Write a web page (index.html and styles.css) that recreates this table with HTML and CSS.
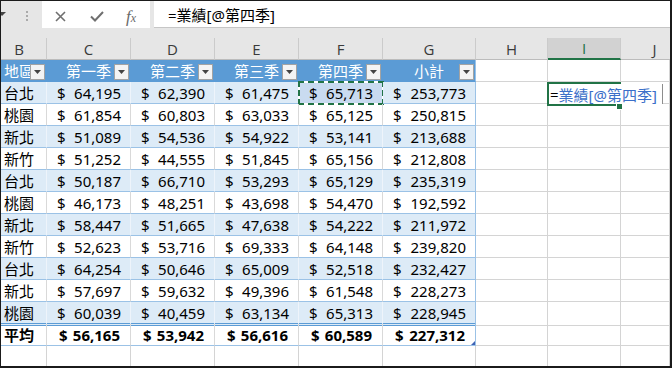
FILE: index.html
```html
<!DOCTYPE html>
<html lang="zh-Hant">
<head>
<meta charset="utf-8">
<link rel="stylesheet" href="styles.css">
</head>
<body>
<div class="frame">
  <div class="fbar">
    <div class="nb"><svg width="6" height="5" viewBox="0 0 6 5"><polygon points="-3,0 5,0 1,4" fill="#444"/></svg></div>
    <div class="grip"><svg width="3" height="11" viewBox="0 0 3 11"><rect x="0" y="0" width="2" height="2" fill="#aaa"/><rect x="0" y="4" width="2" height="2" fill="#aaa"/><rect x="0" y="8" width="2" height="2" fill="#aaa"/></svg></div>
    <div class="fbtns">
      <svg class="ix" width="11" height="11" viewBox="0 0 11 11"><path d="M1 1L10 10M10 1L1 10" stroke="#6f6f6f" stroke-width="1.6" fill="none"/></svg>
      <svg class="iv" width="14" height="11" viewBox="0 0 14 11"><path d="M1 5.5L5 9.5L13 1" stroke="#6f6f6f" stroke-width="2" fill="none"/></svg>
      <span class="fx">f<small>x</small></span>
    </div>
    <div class="finput">=業績[@第四季]</div>
  </div>

  <div class="r ch">
    <div class="c cb">B</div><div class="c">C</div><div class="c">D</div><div class="c">E</div><div class="c">F</div><div class="c">G</div><div class="c">H</div><div class="c sel">I</div><div class="c cj">J</div>
  </div>

  <div class="r th">
    <div class="c t l">地區<span class="fb"><svg width="7" height="4" viewBox="0 0 7 4"><polygon points="0,0 7,0 3.5,4" fill="#444"/></svg></span></div>
    <div class="c t">第一季<span class="fb"><svg width="7" height="4" viewBox="0 0 7 4"><polygon points="0,0 7,0 3.5,4" fill="#444"/></svg></span></div>
    <div class="c t">第二季<span class="fb"><svg width="7" height="4" viewBox="0 0 7 4"><polygon points="0,0 7,0 3.5,4" fill="#444"/></svg></span></div>
    <div class="c t">第三季<span class="fb"><svg width="7" height="4" viewBox="0 0 7 4"><polygon points="0,0 7,0 3.5,4" fill="#444"/></svg></span></div>
    <div class="c t">第四季<span class="fb"><svg width="7" height="4" viewBox="0 0 7 4"><polygon points="0,0 7,0 3.5,4" fill="#444"/></svg></span></div>
    <div class="c t g">小計<span class="fb"><svg width="7" height="4" viewBox="0 0 7 4"><polygon points="0,0 7,0 3.5,4" fill="#444"/></svg></span></div>
    <div class="c"></div><div class="c"></div><div class="c"></div>
  </div>

  <div class="r d band">
    <div class="c t l">台北</div><div class="c t n"><span>$</span><span>64,195</span></div><div class="c t n"><span>$</span><span>62,390</span></div><div class="c t n"><span>$</span><span>61,475</span></div><div class="c t n selc"><span>$</span><span>65,713</span></div><div class="c t n g"><span>$</span><span>253,773</span></div>
    <div class="c"></div><div class="c edit"><span class="ebox">=<span class="ref">業績[@第四季]</span></span><span class="handle"></span></div><div class="c"></div>
  </div>
  <div class="r d">
    <div class="c t l">桃園</div><div class="c t n"><span>$</span><span>61,854</span></div><div class="c t n"><span>$</span><span>60,803</span></div><div class="c t n"><span>$</span><span>63,033</span></div><div class="c t n"><span>$</span><span>65,125</span></div><div class="c t n g"><span>$</span><span>250,815</span></div>
    <div class="c"></div><div class="c"></div><div class="c"></div>
  </div>
  <div class="r d band">
    <div class="c t l">新北</div><div class="c t n"><span>$</span><span>51,089</span></div><div class="c t n"><span>$</span><span>54,536</span></div><div class="c t n"><span>$</span><span>54,922</span></div><div class="c t n"><span>$</span><span>53,141</span></div><div class="c t n g"><span>$</span><span>213,688</span></div>
    <div class="c"></div><div class="c"></div><div class="c"></div>
  </div>
  <div class="r d">
    <div class="c t l">新竹</div><div class="c t n"><span>$</span><span>51,252</span></div><div class="c t n"><span>$</span><span>44,555</span></div><div class="c t n"><span>$</span><span>51,845</span></div><div class="c t n"><span>$</span><span>65,156</span></div><div class="c t n g"><span>$</span><span>212,808</span></div>
    <div class="c"></div><div class="c"></div><div class="c"></div>
  </div>
  <div class="r d band">
    <div class="c t l">台北</div><div class="c t n"><span>$</span><span>50,187</span></div><div class="c t n"><span>$</span><span>66,710</span></div><div class="c t n"><span>$</span><span>53,293</span></div><div class="c t n"><span>$</span><span>65,129</span></div><div class="c t n g"><span>$</span><span>235,319</span></div>
    <div class="c"></div><div class="c"></div><div class="c"></div>
  </div>
  <div class="r d">
    <div class="c t l">桃園</div><div class="c t n"><span>$</span><span>46,173</span></div><div class="c t n"><span>$</span><span>48,251</span></div><div class="c t n"><span>$</span><span>43,698</span></div><div class="c t n"><span>$</span><span>54,470</span></div><div class="c t n g"><span>$</span><span>192,592</span></div>
    <div class="c"></div><div class="c"></div><div class="c"></div>
  </div>
  <div class="r d band">
    <div class="c t l">新北</div><div class="c t n"><span>$</span><span>58,447</span></div><div class="c t n"><span>$</span><span>51,665</span></div><div class="c t n"><span>$</span><span>47,638</span></div><div class="c t n"><span>$</span><span>54,222</span></div><div class="c t n g"><span>$</span><span>211,972</span></div>
    <div class="c"></div><div class="c"></div><div class="c"></div>
  </div>
  <div class="r d">
    <div class="c t l">新竹</div><div class="c t n"><span>$</span><span>52,623</span></div><div class="c t n"><span>$</span><span>53,716</span></div><div class="c t n"><span>$</span><span>69,333</span></div><div class="c t n"><span>$</span><span>64,148</span></div><div class="c t n g"><span>$</span><span>239,820</span></div>
    <div class="c"></div><div class="c"></div><div class="c"></div>
  </div>
  <div class="r d band">
    <div class="c t l">台北</div><div class="c t n"><span>$</span><span>64,254</span></div><div class="c t n"><span>$</span><span>50,646</span></div><div class="c t n"><span>$</span><span>65,009</span></div><div class="c t n"><span>$</span><span>52,518</span></div><div class="c t n g"><span>$</span><span>232,427</span></div>
    <div class="c"></div><div class="c"></div><div class="c"></div>
  </div>
  <div class="r d">
    <div class="c t l">新北</div><div class="c t n"><span>$</span><span>57,697</span></div><div class="c t n"><span>$</span><span>59,632</span></div><div class="c t n"><span>$</span><span>49,396</span></div><div class="c t n"><span>$</span><span>61,548</span></div><div class="c t n g"><span>$</span><span>228,273</span></div>
    <div class="c"></div><div class="c"></div><div class="c"></div>
  </div>
  <div class="r d band last">
    <div class="c t l">桃園</div><div class="c t n"><span>$</span><span>60,039</span></div><div class="c t n"><span>$</span><span>40,459</span></div><div class="c t n"><span>$</span><span>63,134</span></div><div class="c t n"><span>$</span><span>65,313</span></div><div class="c t n g"><span>$</span><span>228,945</span></div>
    <div class="c"></div><div class="c"></div><div class="c"></div>
  </div>
  <div class="r d total">
    <div class="c t l">平均</div><div class="c t n"><span>$</span><span>56,165</span></div><div class="c t n"><span>$</span><span>53,942</span></div><div class="c t n"><span>$</span><span>56,616</span></div><div class="c t n"><span>$</span><span>60,589</span></div><div class="c t n g"><span>$</span><span>227,312</span><span class="rsz"></span></div>
    <div class="c"></div><div class="c"></div><div class="c"></div>
  </div>
  <div class="r d">
    <div class="c"></div><div class="c"></div><div class="c"></div><div class="c"></div><div class="c"></div><div class="c"></div><div class="c"></div><div class="c"></div><div class="c"></div>
  </div>
</div>
</body>
</html>
```

FILE: styles.css
```css
* { box-sizing: border-box; margin: 0; padding: 0; }
body { margin: 0; background: #fff; }

.frame {
  width: 672px;
  height: 368px;
  border-style: solid;
  border-color: #1b1b1b;
  border-width: 1px 2px 2px 1px;
  overflow: hidden;
  background: #fff;
  font-family: "Noto Sans", "Noto Sans CJK TC", sans-serif;
  font-size: 15px;
  color: #000;
}

/* formula bar */
.fbar {
  height: 37px;
  background: #e6e6e6;
  display: flex;
  align-items: flex-start;
}
.nb {
  width: 20px;
  height: 27px;
  display: flex;
  align-items: center;
}
.nb svg { margin-top: -1px; }
.grip {
  width: 21px;
  height: 27px;
  display: flex;
  align-items: center;
  padding-left: 5px;
  padding-top: 3px;
}
.fbtns {
  width: 108px;
  height: 27px;
  background: #fff;
  display: flex;
  align-items: center;
  padding-left: 13px;
  padding-top: 3px;
}
.iv { margin-left: 24px; }
.fx {
  margin-left: 22px;
  font-family: "Liberation Serif", "DejaVu Serif", serif;
  font-style: italic;
  font-size: 17px;
  color: #6a6a6a;
  line-height: 1;
}
.fx small { font-size: 12px; }
.finput {
  flex: 1;
  height: 27px;
  margin-left: 4px;
  background: #fff;
  border-bottom: 1px solid #c6c6c6;
  padding-left: 14px;
  display: flex;
  align-items: center;
  padding-top: 1px;
}

/* grid rows */
.r {
  display: grid;
  grid-template-columns: 46px 84px 84px 84px 84px 93px 72px 73px 1fr;
  height: 22px;
}
.c {
  position: relative;
  display: flex;
  align-items: center;
  white-space: nowrap;
  border-right: 1px solid #d4d4d4;
  border-bottom: 1px solid #d4d4d4;
}

/* column headers */
.ch .c {
  background: #e6e6e6;
  border-right-color: #cbcbcb;
  border-bottom-color: #bcbcbc;
  justify-content: center;
  color: #3a3a3a;
  font-family: "Open Sans", "Noto Sans", sans-serif;
}
.ch .cb { padding-right: 9px; }
.ch .cj { padding-left: 18px; border-right: none; }
.ch .sel {
  background: #d2d2d2;
  border-bottom: 2px solid #217346;
  color: #217346;
}

/* table header */
.th .t {
  background: #5b9bd5;
  color: #fff;
  justify-content: center;
  border-right-color: #5b9bd5;
  border-bottom-color: #5b9bd5;
}
.th .t.l { justify-content: flex-start; padding-left: 3px; }
.th .t.g { border-right-color: #9bc2e6; }
.fb {
  position: absolute;
  right: 1px;
  top: 4px;
  width: 15px;
  height: 16px;
  background: #f4f4f4;
  border: 1px solid #a3a3a3;
  display: flex;
  align-items: center;
  justify-content: center;
  z-index: 2;
}

/* data */
.d .t {
  border-bottom-color: #9bc2e6;
  border-right-color: #d9d9d9;
}
.d.band .t {
  background: #ddebf7;
  border-right-color: #eef4fb;
}
.d .t.g { border-right-color: #9bc2e6; }
.d .l { padding-left: 3px; }
.n {
  justify-content: space-between;
  padding: 0 9px 0 10px;
}
.d.last .t { border-bottom: 3px double #5b9bd5; }
.d.total .t { font-weight: bold; }
.d.total .n { padding: 0 10px 0 12px; }

/* selected (copied) cell */
.d.band .selc { background: #c9dbf0; }
.selc::before,
.selc::after {
  content: "";
  position: absolute;
  left: -1px;
  right: -2px;
  top: -1px;
  bottom: -2px;
}
.selc::before { border: 2px solid #fff; }
.selc::after { border: 2px dashed #217346; }

/* editing cell */
.edit::after {
  content: "";
  position: absolute;
  left: -1px;
  right: -1px;
  top: 0;
  bottom: -3px;
  border: 2px solid #217346;
  z-index: 2;
}
.ebox {
  position: absolute;
  left: 1px;
  top: 2px;
  width: 114px;
  height: 20px;
  background: #fff;
  border-right: 1px solid #8d8d8d;
  display: flex;
  align-items: center;
  padding-left: 1px;
  z-index: 3;
  color: #000;
}
.ref { color: #3b6fc9; }
.handle {
  position: absolute;
  left: 69px;
  top: 22px;
  width: 5px;
  height: 5px;
  background: #217346;
  box-shadow: 0 0 0 1px #fff;
  z-index: 4;
}
.rsz {
  position: absolute;
  right: 0;
  bottom: 0;
  width: 4px;
  height: 4px;
  background: #3f63b5;
  clip-path: polygon(100% 0, 100% 100%, 0 100%);
}
```
